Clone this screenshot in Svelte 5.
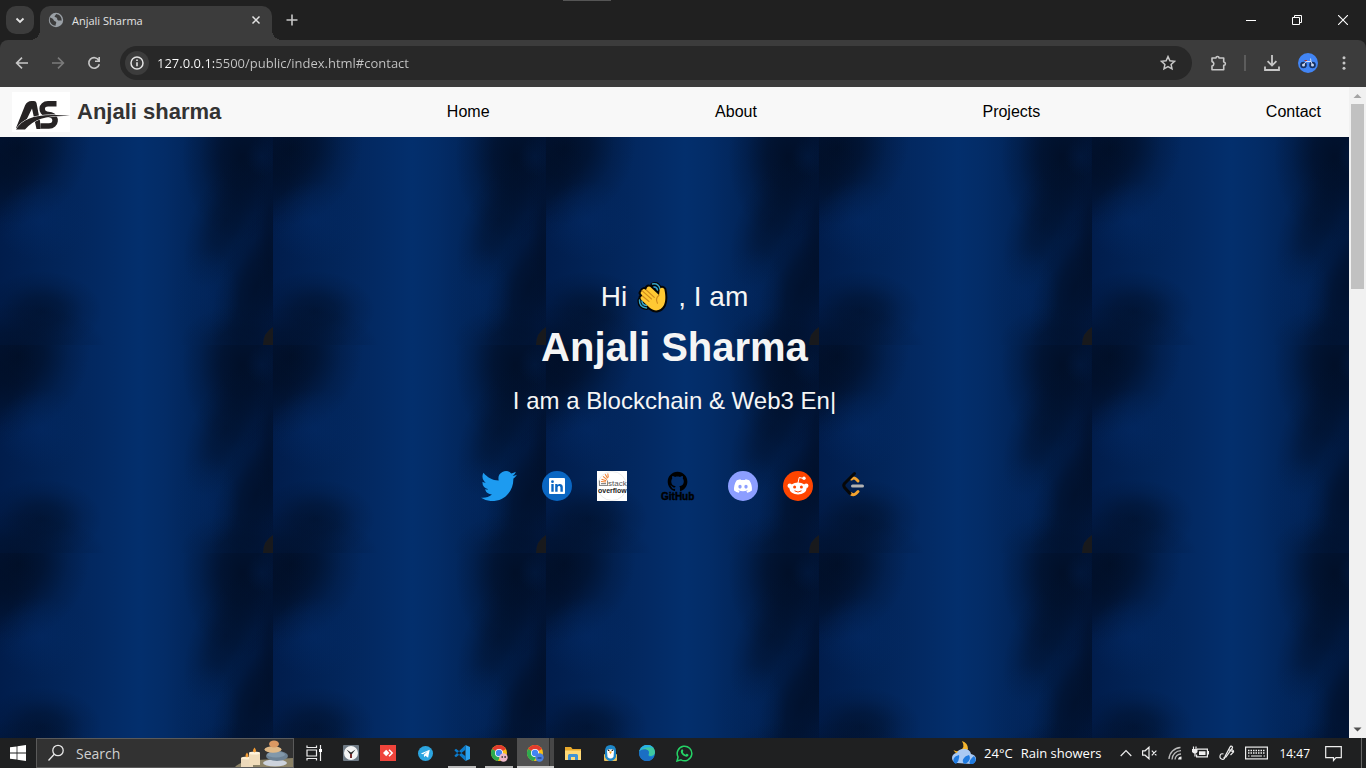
<script>
  const links = ['Home', 'About', 'Projects', 'Contact'];
</script>

<div class="screen">
  <header class="tabstrip">
    <button class="tabsearch" aria-label="Search tabs">
      <svg width="10" height="10" viewBox="0 0 10 10"><path d="M1.5 3.5 5 7l3.500-3.500" fill="none" stroke="#e3e3e3" stroke-width="1.800" /></svg>
    </button>
    <div class="tab">
      <svg width="16" height="16" viewBox="0 0 16 16">
        <circle cx="8" cy="8" r="7.200" fill="#9aa0a6" />
        <path d="M2 5.500C4 6 5 6.500 5.600 8c.6 1.400 2 1 2.600 2.300.4 1-.8 1.700-.6 3.500C4.500 13.500 2 11.500 1.800 8zM8 2c-.2 1.600-1.600 1.400-1.400 2.600.2 1 1.800.6 2.400 1.600.5.900 0 1.800 1.200 2.300 1 .4 2-.6 3.400.2.300-2.700-1-4.800-2.900-6z" fill="#3c3c3c" />
      </svg>
      <span class="tabtitle">Anjali Sharma</span>
      <button class="icon small" aria-label="Close tab">
        <svg width="10" height="10" viewBox="0 0 10 10"><path d="M1.500 1.500l7 7m0-7l-7 7" stroke="#e3e3e3" stroke-width="1.500" /></svg>
      </button>
    </div>
    <button class="icon newtab" aria-label="New tab">
      <svg width="12" height="12" viewBox="0 0 12 12"><path d="M6 .5v11M.5 6h11" stroke="#c7c7c7" stroke-width="1.600" /></svg>
    </button>
    <div class="handle"></div>
    <div class="wincontrols">
      <button aria-label="Minimize"><svg width="10" height="10" viewBox="0 0 10 10"><path d="M0 5.500h10" stroke="#fff" /></svg></button>
      <button aria-label="Restore"><svg width="10" height="10" viewBox="0 0 10 10"><path d="M.5 2.500h7v7h-7zM2.500 2.500v-2h7v7h-2" fill="none" stroke="#fff" /></svg></button>
      <button aria-label="Close"><svg width="10" height="10" viewBox="0 0 10 10"><path d="M0 0l10 10M10 0L0 10" stroke="#fff" stroke-width="1.100" /></svg></button>
    </div>
  </header>

  <div class="toolbar">
    <button class="icon" aria-label="Back"><svg width="14" height="14" viewBox="0 0 14 14"><path d="M13 7H2M7 1.600 1.600 7 7 12.400" fill="none" stroke="#c7c7c7" stroke-width="1.600" /></svg></button>
    <button class="icon" aria-label="Forward"><svg width="14" height="14" viewBox="0 0 14 14"><path d="M1 7h11M7 1.600 12.400 7 7 12.400" fill="none" stroke="#7b7b7b" stroke-width="1.600" /></svg></button>
    <button class="icon" aria-label="Reload"><svg width="14" height="14" viewBox="0 0 14 14"><path d="M11.800 4.400A5.300 5.300 0 1 0 12.300 8.200M12.200 1v4.300H8" fill="none" stroke="#c7c7c7" stroke-width="1.600" /></svg></button>
    <form class="omnibox">
      <button type="button" class="siteinfo" aria-label="Site information">
        <svg width="14" height="14" viewBox="0 0 14 14"><circle cx="7" cy="7" r="6" fill="none" stroke="#e3e3e3" stroke-width="1.500" /><path d="M7 6.200v4M7 3.600v1.400" stroke="#e3e3e3" stroke-width="1.600" /></svg>
      </button>
      <input class="url" aria-label="Address" value="127.0.0.1:5500/public/index.html#contact" />
      <button type="button" class="icon" aria-label="Bookmark">
        <svg width="16" height="16" viewBox="0 0 16 16"><path d="M8 1.600l1.900 4.200 4.600.5-3.400 3.100.9 4.500L8 11.600l-4 2.300.9-4.500L1.500 6.300l4.600-.5z" fill="none" stroke="#c7c7c7" stroke-width="1.500" /></svg>
      </button>
    </form>
    <div class="actions">
      <button class="icon" aria-label="Extensions">
        <svg width="18" height="18" viewBox="0 0 18 18"><path d="M3 4h4a1.500 1.500 0 0 1 3 0h4.700v4a1.700 1.700 0 0 1 0 3.400v4.300H3v-3.600a2.300 2.300 0 0 0 0-4.500z" fill="none" stroke="#c7c7c7" stroke-width="1.600" stroke-linejoin="round" /></svg>
      </button>
      <span class="divider"></span>
      <button class="icon" aria-label="Downloads">
        <svg width="18" height="18" viewBox="0 0 18 18"><path d="M9 1v10.500M4.600 7.200 9 11.600l4.400-4.400M2 12.500V16h14v-3.500" fill="none" stroke="#c7c7c7" stroke-width="1.800" /></svg>
      </button>
      <button class="icon" aria-label="Profile">
        <svg width="20" height="20" viewBox="0 0 20 20"><circle cx="10" cy="10" r="10" fill="#4285f4" /><g fill="#c3d6f5" stroke="#17305f" stroke-width="1.800"><circle cx="5.500" cy="12" r="2.400" /><circle cx="14.500" cy="12" r="2.400" /></g><path d="M5.500 12 8 8.500h5M13 8.500l1.500 3.500M13 8.500l-.5-3" fill="none" stroke="#d5dcef" stroke-width="1" /><path d="M6.500 7.500H9" stroke="#a33" /></svg>
      </button>
      <button class="icon" aria-label="Menu">
        <svg width="4" height="16" viewBox="0 0 4 16" fill="#c7c7c7"><circle cx="2" cy="2.800" r="1.500" /><circle cx="2" cy="8" r="1.500" /><circle cx="2" cy="13.200" r="1.500" /></svg>
      </button>
    </div>
  </div>

  <div class="viewport">
    <div class="page">
      <nav>
        <div class="brand">
          <svg width="58" height="40" viewBox="0 0 58 40">
            <rect width="58" height="40" fill="#fff" />
            <path d="M4 36 13 13.500Q15 9 19.500 9H22q2 0 2.500 2L29.500 37h-5L20 16.500 10.500 36z" fill="#262324" />
            <path d="M44.500 11.800H36c-7.500 0-7.500 9-1.500 10.300l4.500.9c6 1.500 5.500 11-2 11h-8.500" fill="none" stroke="#fff" stroke-width="8" />
            <path d="M44.500 11.800H36c-7.500 0-7.500 9-1.500 10.300l4.500.9c6 1.500 5.500 11-2 11h-8.500" fill="none" stroke="#262324" stroke-width="5.500" />
            <path d="M4 37.500C11 25.500 27 20.500 58 24c-21-.7-35 1.500-45 13.500z" fill="#fff" stroke="#fff" stroke-width="1" />
            <path d="M4 37.500C11 25.500 27 20.500 58 24c-21-.7-35 1.500-45 13.500z" fill="#262324" />
          </svg>
          <span>Anjali sharma</span>
        </div>
        {#each links as link}
          <a href={'#' + link.toLowerCase()}>{link}</a>
        {/each}
      </nav>

      <main>
        <svg class="backdrop" aria-hidden="true">
          <defs>
            <linearGradient id="base">
              <stop offset="0" stop-color="#011d4c" />
              <stop offset=".2" stop-color="#022458" />
              <stop offset=".36" stop-color="#032962" />
              <stop offset=".51" stop-color="#032f6d" />
              <stop offset=".6" stop-color="#032c67" />
              <stop offset=".72" stop-color="#022559" />
              <stop offset=".86" stop-color="#011e4b" />
              <stop offset="1" stop-color="#011840" />
            </linearGradient>
            <radialGradient id="shade">
              <stop offset="0" stop-color="#010e25" stop-opacity=".9" />
              <stop offset=".35" stop-color="#010e25" stop-opacity=".68" />
              <stop offset=".7" stop-color="#010e25" stop-opacity=".22" />
              <stop offset="1" stop-color="#010e25" stop-opacity="0" />
            </radialGradient>
            <radialGradient id="glow">
              <stop offset="0" stop-color="#032a66" stop-opacity=".5" />
              <stop offset="1" stop-color="#032a66" stop-opacity="0" />
            </radialGradient>
            <pattern id="tile" width="273" height="208" patternUnits="userSpaceOnUse">
              <rect width="273" height="208" fill="url(#base)" />
              <g fill="url(#shade)">
                <ellipse cx="18" cy="12" rx="70" ry="78" transform="rotate(30 18 12)" />
                <ellipse cx="0" cy="40" rx="40" ry="60" opacity=".6" />
                <ellipse cx="42" cy="174" rx="60" ry="40" opacity=".7" />
                <ellipse cx="16" cy="210" rx="90" ry="44" opacity=".8" />
                <ellipse cx="242" cy="20" rx="60" ry="84" />
                <ellipse cx="226" cy="84" rx="34" ry="72" transform="rotate(24 226 84)" opacity=".6" />
                <ellipse cx="256" cy="150" rx="38" ry="88" transform="rotate(18 256 150)" opacity=".8" />
                <ellipse cx="240" cy="206" rx="60" ry="38" opacity=".6" />
                <ellipse cx="273" cy="100" rx="18" ry="100" opacity=".5" />
              </g>
              <g fill="url(#glow)">
                <ellipse cx="42" cy="84" rx="46" ry="40" />
                <ellipse cx="262" cy="20" rx="16" ry="20" opacity=".4" />
                <ellipse cx="206" cy="158" rx="34" ry="46" opacity=".7" />
              </g>
              <path d="M263 208q0-12 10-18v18z" fill="#1b1a1a" opacity=".9" />
            </pattern>
          </defs>
          <rect width="100%" height="100%" fill="url(#tile)" />
        </svg>

        <div class="hero">
          <p class="hi">
            <span>Hi</span>
            <svg width="31" height="32" viewBox="0 0 31 32">
              <g stroke="#050505" stroke-width="4" stroke-linejoin="round" stroke-linecap="round" fill="none">
                <path d="M15.500 3.500q5-2 7.500 4M2.500 19q-.5 7 7 8" />
                <path d="M5 9.500Q6.500 7 9 9l1-2.500q2-2 4.500.5l7.500 7 .8-6Q25 5.500 27.300 8c1 4.500 2 11-.3 16-3 6-9 7-14 3L4 18.500q-1.500-3 1.500-3.500L3.500 12z" fill="#fc3" />
              </g>
              <path d="M15.500 3q6-1 7.500 5M17 6q3 0 3.500 3M2.500 19q-.5 7 7 8M5 20q0 4 4.500 4.500" fill="none" stroke="#35a5c8" stroke-width="1.500" stroke-linecap="round" />
              <path d="M5 9.500Q6.500 7 9 9l1-2.500q2-2 4.500.5l7.500 7 .8-6Q25 5.500 27.300 8c1 4.500 2 11-.3 16-3 6-9 7-14 3L4 18.500q-1.500-3 1.500-3.500L3.500 12z" fill="#ffc933" />
              <path d="M5.500 15l6.500 5.500M5 9.700l9.500 8.300M9.300 9l8 7.300M22 14.300q-4 3-1.500 8" fill="none" stroke="#d08a1c" stroke-width="1.100" stroke-linecap="round" />
            </svg>
            <span>, I am</span>
          </p>
          <h1>Anjali Sharma</h1>
          <p class="typed">I am a Blockchain &amp; Web3 En|</p>
          <div class="social">
            <a href="#twitter" aria-label="Twitter">
              <svg width="36" height="30" viewBox="0 2.100 24 19.600" preserveAspectRatio="none"><path fill="#1d9bf0" d="M23.953 4.570a10 10 0 01-2.825.775 4.958 4.958 0 002.163-2.723c-.951.555-2.005.959-3.127 1.184a4.920 4.920 0 00-8.384 4.482C7.690 8.095 4.067 6.130 1.640 3.162a4.822 4.822 0 00-.666 2.475c0 1.710.870 3.213 2.188 4.096a4.904 4.904 0 01-2.228-.616v.060a4.923 4.923 0 003.946 4.827 4.996 4.996 0 01-2.212.085 4.936 4.936 0 004.604 3.417 9.867 9.867 0 01-6.102 2.105c-.390 0-.779-.023-1.170-.067a13.995 13.995 0 007.557 2.209c9.053 0 13.998-7.496 13.998-13.985 0-.210 0-.420-.015-.630A9.935 9.935 0 0024 4.590z" /></svg>
            </a>
            <a href="#linkedin" aria-label="LinkedIn">
              <svg width="30" height="30" viewBox="0 0 30 30"><circle cx="15" cy="15" r="15" fill="#0a66c2" /><rect x="7" y="7" width="16" height="16" rx="1" fill="#fff" /><path d="M9.300 13h2.400v7.700H9.300zM13.200 13h2.300v1.100c1-1.800 5.300-1.900 5.300 1.900v4.700h-2.400v-4.200c0-2.200-2.800-2-2.800 0v4.200h-2.400z" fill="#0a66c2" /><circle cx="10.500" cy="10.700" r="1.400" fill="#0a66c2" /></svg>
            </a>
            <a href="#stackoverflow" aria-label="Stack Overflow">
              <svg width="30" height="30" viewBox="0 0 30 30">
                <rect width="30" height="30" fill="#fff" /><circle cx="15" cy="15" r="14.500" fill="#fff" stroke="#e4e4e4" stroke-width=".7" />
                <path d="M2.500 9.500v5h8v-5M4 12.600h5" fill="none" stroke="#888" stroke-width="1.100" />
                <path d="M4 10.500l5 .5M4.500 8.200l4.700 1.600M6 5.400l4 3.200M8.200 3.300l2.400 4M10.800 2.500l.5 4" stroke="#ef8236" stroke-width="1.100" />
                <text x="11" y="15" font-size="8" fill="#555">stack</text>
                <text x="1" y="21.500" font-size="7" font-weight="700" fill="#222">overflow</text>
              </svg>
            </a>
            <a href="#github" aria-label="GitHub">
              <svg width="51" height="30" viewBox="0 0 51 30">
                <g transform="translate(15.700 .6) scale(.82)"><path d="M12 .297c-6.630 0-12 5.373-12 12 0 5.303 3.438 9.800 8.205 11.385.600.113.820-.258.820-.577 0-.285-.010-1.040-.015-2.040-3.338.724-4.042-1.610-4.042-1.610C4.422 18.070 3.633 17.700 3.633 17.700c-1.087-.744.084-.729.084-.729 1.205.084 1.838 1.236 1.838 1.236 1.070 1.835 2.809 1.305 3.495.998.108-.776.417-1.305.760-1.605-2.665-.300-5.466-1.332-5.466-5.930 0-1.310.465-2.380 1.235-3.220-.135-.303-.540-1.523.105-3.176 0 0 1.005-.322 3.300 1.230.960-.267 1.980-.399 3-.405 1.020.006 2.040.138 3 .405 2.280-1.552 3.285-1.230 3.285-1.230.645 1.653.240 2.873.120 3.176.765.840 1.230 1.910 1.230 3.220 0 4.610-2.805 5.625-5.475 5.920.420.360.810 1.096.810 2.220 0 1.606-.015 2.896-.015 3.286 0 .315.210.690.825.570C20.565 22.092 24 17.592 24 12.297c0-6.627-5.373-12-12-12" /></g>
                <text x="9" y="29" font-size="10" font-weight="700" stroke="#000" stroke-width=".4">GitHub</text>
              </svg>
            </a>
            <a href="#discord" aria-label="Discord">
              <svg width="30" height="30" viewBox="0 0 30 30"><circle cx="15" cy="15" r="15" fill="#8c9eff" /><g transform="translate(6 6) scale(.75)"><path fill="#fff" d="M20.317 4.370a19.791 19.791 0 00-4.885-1.515.074.074 0 00-.079.037c-.211.375-.445.865-.608 1.250-1.845-.276-3.680-.276-5.487 0-.164-.393-.406-.874-.618-1.250a.077.077 0 00-.079-.037 19.736 19.736 0 00-4.885 1.515.070.070 0 00-.032.028C.533 9.046-.319 13.580.099 18.058a.082.082 0 00.031.056c2.053 1.508 4.041 2.423 5.993 3.029a.078.078 0 00.084-.028c.462-.630.873-1.295 1.226-1.994a.076.076 0 00-.042-.106c-.653-.248-1.274-.550-1.872-.892a.077.077 0 01-.008-.128l.372-.291a.074.074 0 01.078-.011c3.928 1.793 8.180 1.793 12.061 0a.074.074 0 01.079.010l.373.292a.077.077 0 01-.007.128c-.598.343-1.220.645-1.873.891a.077.077 0 00-.041.107c.360.698.772 1.363 1.225 1.993a.076.076 0 00.084.029c1.961-.607 3.950-1.522 6.002-3.029a.077.077 0 00.031-.055c.500-5.177-.838-9.674-3.549-13.660a.061.061 0 00-.031-.029zM8.020 15.331c-1.183 0-2.157-1.086-2.157-2.419s.956-2.419 2.157-2.419c1.211 0 2.176 1.095 2.157 2.419 0 1.333-.956 2.419-2.157 2.419zm7.975 0c-1.183 0-2.157-1.086-2.157-2.419s.955-2.419 2.157-2.419c1.211 0 2.176 1.095 2.157 2.419 0 1.333-.946 2.419-2.157 2.419z" /></g></svg>
            </a>
            <a href="#reddit" aria-label="Reddit">
              <svg width="30" height="30" viewBox="0 0 30 30"><circle cx="15" cy="15" r="15" fill="#ff4500" /><g fill="#fff"><ellipse cx="15" cy="17.500" rx="8.600" ry="6" /><circle cx="6.800" cy="14.700" r="2.300" /><circle cx="23.200" cy="14.700" r="2.300" /><circle cx="21" cy="7.300" r="1.700" /></g><path d="M15 12l1.200-5.500 4.500 1" fill="none" stroke="#fff" stroke-width="1" /><g fill="#ff4500"><circle cx="11.600" cy="16" r="1.500" /><circle cx="18.400" cy="16" r="1.500" /></g><path d="M11.500 19.800q3.500 2.500 7 0" fill="none" stroke="#ff4500" stroke-width="1" /></svg>
            </a>
            <a href="#leetcode" aria-label="LeetCode">
              <svg width="30" height="30" viewBox="0 0 30 30" fill="none" stroke-width="3" stroke-linecap="round" stroke-linejoin="round"><path d="M13.500 8q2.500-2 4.500 0l2 2M12.500 22.500q3 2.500 5.500 0l2-2" stroke="#f5a32e" /><path d="M16.500 2.500 6.500 12.500q-1.500 2 0 4l5.500 6" stroke="#070707" /><path d="M14.500 15h10" stroke="#b3b3b3" /></svg>
            </a>
          </div>
        </div>
      </main>
    </div>
    <div class="scrollbar">
      <svg width="17" height="17" viewBox="0 0 17 17"><path d="M4.500 11 8.500 7l4 4z" fill="#a3a3a3" /></svg>
      <div class="track"><div class="thumb"></div></div>
      <svg width="17" height="17" viewBox="0 0 17 17"><path d="M4.500 6.500l4 4 4-4z" fill="#505050" /></svg>
    </div>
  </div>

  <footer class="taskbar">
    <button class="start" aria-label="Start">
      <svg width="16" height="16" viewBox="0 0 16 16" fill="#fff"><path d="M0 2.300 6.600 1.400v6.200H0zM7.400 1.300 16 0v7.600H7.400zM0 8.400h6.600v6.200L0 13.700zM7.400 8.400H16V16l-8.600-1.300z" /></svg>
    </button>
    <div class="search">
      <svg width="18" height="18" viewBox="0 0 18 18"><circle cx="11" cy="6.500" r="5.200" fill="none" stroke="#e8e8e8" stroke-width="1.300" /><path d="M7.200 10.200 1.500 16.500" stroke="#e8e8e8" stroke-width="1.300" /></svg>
      <input type="text" placeholder="Search" aria-label="Search" />
      <svg class="art" width="58" height="28" viewBox="0 0 58 28">
        <path d="M0 28q5-6 22-7l36-2v9z" fill="#8b8266" />
        <rect x="6" y="19" width="12" height="9" fill="#ecd9bb" /><ellipse cx="12" cy="19" rx="6" ry="1.500" fill="#fff0d2" />
        <rect x="14" y="14" width="11" height="12" fill="#f0dcba" /><ellipse cx="19.500" cy="14" rx="5.500" ry="1.500" fill="#fff3da" />
        <path d="M12 13.500q3 4 0 5-3-1 0-5zM19.500 8.500q3 4 0 5-3-1 0-5z" fill="#f49b32" />
        <ellipse cx="40" cy="24" rx="12" ry="3.500" fill="#cdd3dc" /><ellipse cx="42" cy="17" rx="11" ry="5" fill="#6e8294" /><ellipse cx="41" cy="15.500" rx="9" ry="3" fill="#8298aa" /><ellipse cx="38" cy="10.500" rx="8.500" ry="3.200" fill="#e0b987" /><ellipse cx="39" cy="5" rx="5" ry="3.500" fill="#db9862" />
      </svg>
    </div>
    <div class="apps">
      <button aria-label="Task view"><svg width="17" height="16" viewBox="0 0 17 16"><path d="M1 .5v2h9.500v-2M1 15.500v-2h9.500v2M1 5h9.500v6H1zM14.500 0v16" fill="none" stroke="#eee" stroke-width="1.200" /><path d="M13 4h3v3h-3z" fill="#fff" /></svg></button>
      <button aria-label="Clock"><svg width="16" height="16" viewBox="0 0 16 16"><rect width="16" height="16" rx="1" fill="#6f7b86" /><circle cx="8" cy="8" r="7" fill="#f4f4f4" /><path d="M3.500 4.500 8 7.500l4.500-3-3.500 4.500V13H7V9z" fill="#2a2a2a" /><path d="M8 9v4" stroke="#c93030" /></svg></button>
      <button aria-label="AnyDesk"><svg width="16" height="16" viewBox="0 0 16 16"><rect width="16" height="16" fill="#ef443b" /><path d="M3 8l3.200-3.200L9.400 8l-3.200 3.200z" fill="#fff" /><path d="M9 4.800 12.200 8 9 11.200" fill="none" stroke="#fff" stroke-width="1.500" /></svg></button>
      <button aria-label="Telegram"><svg width="15" height="15" viewBox="0 0 16 16"><circle cx="8" cy="8" r="8" fill="#2ca5e0" /><path d="M3 8l9.500-4-1.700 8.500-3-2-1.300 1.400-.3-2.600 4.200-3.600-5.200 3.200z" fill="#fff" /></svg></button>
      <button class="open" aria-label="Visual Studio Code"><svg width="16" height="16" viewBox="0 0 16 16"><path d="M11.500 0 16 2v12l-4.500 2z" fill="#2ba3f0" /><path d="M11.500 0v4.800L2 12.200.5 11v-.6zM11.500 16v-4.800L2 3.800.5 5v.6z" fill="#0b7bcc" /></svg></button>
      <button class="open" aria-label="Chrome">
        <svg width="17" height="17" viewBox="0 0 17 17"><circle cx="8" cy="8" r="8" fill="#fbc116" /><path d="M8 8 1.100 4A8 8 0 0 1 15 4z" fill="#e33b2e" /><path d="M8 8 1.100 4a8 8 0 0 0 5.800 12L10 10z" fill="#2da94f" /><circle cx="8" cy="8" r="4" fill="#fff" /><circle cx="8" cy="8" r="3.200" fill="#4285f4" /><circle cx="12.500" cy="12.500" r="4.200" fill="#edb7c8" /><path d="M10.500 12h1.500m1.300 0H15" stroke="#333" stroke-width="1.500" /></svg>
      </button>
      <button class="open active" aria-label="Chrome, active window">
        <svg width="17" height="17" viewBox="0 0 17 17"><circle cx="8" cy="8" r="8" fill="#fbc116" /><path d="M8 8 1.100 4A8 8 0 0 1 15 4z" fill="#e33b2e" /><path d="M8 8 1.100 4a8 8 0 0 0 5.800 12L10 10z" fill="#2da94f" /><circle cx="8" cy="8" r="4" fill="#fff" /><circle cx="8" cy="8" r="3.200" fill="#4285f4" /><circle cx="12.500" cy="12.500" r="4.200" fill="#4b80df" /><path d="M10.500 13h4" stroke="#27488e" stroke-width="1.500" /></svg>
      </button>
      <button aria-label="File Explorer"><svg width="16" height="15" viewBox="0 0 16 15"><path d="M0 1h6l1.500 2H16v11H0z" fill="#e8a92c" /><path d="M0 4.500h16V14H0z" fill="#ffd977" /><path d="M3 14V9.500Q3 8 4.500 8h7Q13 8 13 9.500V14h-3v-3H6v3z" fill="#3f93d6" /></svg></button>
      <button aria-label="Penguin"><svg width="13" height="16" viewBox="0 0 13 16"><rect y="9" width="13" height="7" rx="1" fill="#e9c05a" /><path d="M1 12V6q0-6 5.500-6T12 6v6q-2 4-5.500 4T1 12z" fill="#1e88c9" /><path d="M3 6q1-3 3.500-1.500Q9 3 10 6l-.5 6q-3 3-6 0z" fill="#fff" /><path d="M5 6.500h3l-1.500 2.700z" fill="#f5a21b" /><circle cx="4.700" cy="5.200" r=".8" /><circle cx="8.300" cy="5.200" r=".8" /></svg></button>
      <button aria-label="Edge"><svg width="16" height="16" viewBox="0 0 16 16"><circle cx="8" cy="8" r="8" fill="#1683d4" /><path d="M.3 6.500C1.500 2.500 4.500 0 8.200 0 13 0 16 3.500 16 7c0 3-2.300 4-4.500 4-2 0-2.500-1-1.500-2 .6-3-1.800-4.500-4.200-4.300C3 4.700 1 5.500.3 6.500z" fill="#3fc9a0" /><path d="M.3 6.500C2 3.500 8 3.500 9.500 6c1 2-.6 2-.3 4 .3 2 3 3.200 6 1.500C13 16 8 17 5 15.500.5 13.500-.3 9.500.3 6.500z" fill="#1b6fc4" /><path d="M.3 6.500C1.500 2.500 4.500 0 8.200 0c3 0 5 1.200 6.500 3C12 1.500 4 1.500.3 6.500z" fill="#28b0e6" /></svg></button>
      <button aria-label="WhatsApp"><svg width="17" height="17" viewBox="0 0 17 17"><path d="M1 16l1.100-4A7.300 7.300 0 1 1 5 14.900z" fill="none" stroke="#25d366" stroke-width="1.500" /><path d="M5.300 4.800c.8-1 1.400-.6 1.700.3.400 1 .4 1-.2 1.800.6 1.300 1.600 2.200 2.900 2.800.8-.9.900-1.100 1.800-.6 1.200.6 1.200.8.800 1.600-1.200 1.700-3.300 1-5-.2-2-1.500-3.300-3.500-2-5.700z" fill="#25d366" /></svg></button>
    </div>
    <div class="tray">
      <button class="weather">
        <svg width="24" height="24" viewBox="0 0 24 24"><path d="M10 0q4 7-2.500 9.500Q4 11 1.500 9 4 14 9 13t7-5Q16 2 10 0z" fill="#f5b52e" /><path d="M5 22a5 5 0 0 1 0-10q1-4 7-4t7 5q5 1 5 5t-5 5z" fill="#a9c9f3" /><path d="M4 23q-4-2-2-6 1-2 5-3 1 5-3 9zM13 23q-4-2-1-6 1-2 5-3 3 5-4 9zM18 23q-2-3 4-8 4 5-1 8z" fill="#1f7be0" /></svg>
        <span>24°C</span><span>Rain showers</span>
      </button>
      <svg width="12" height="12" viewBox="0 0 12 12"><path d="M.7 9 6 3.500 11.300 9" fill="none" stroke="#eee" stroke-width="1.200" /></svg>
      <svg width="16" height="14" viewBox="0 0 16 14"><path d="M.6 4.800h2.500L7 1.200v11.600L3.100 9.200H.6zM9.800 4.700l4.600 4.600m0-4.600L9.800 9.300" fill="none" stroke="#eee" stroke-width="1.200" /></svg>
      <svg width="14" height="14" viewBox="0 0 14 14"><g fill="none" stroke="#bbb" stroke-width="1.300"><path d="M1 13A12 12 0 0 1 12.500 1.500M4 13.500A9 9 0 0 1 13 4.700M7 13.500a6 6 0 0 1 6-5.500" /></g><path d="M10 13.500a3.500 3.500 0 0 1 3.500-3v3z" fill="#eee" /></svg>
      <svg width="17" height="14" viewBox="0 0 17 14"><path d="M5 3.100h10.400v7.800H4.600V8.500M15.400 5.500h1v3" fill="none" stroke="#eee" stroke-width="1.200" /><path d="M7 5.200h6.500v3.800H7zM0 3h5.500v3Q4.500 7.500 3 7.500T0 6z" fill="#eee" /><path d="M1.500 .5v3M4 .5v3M3 7v3.500" stroke="#eee" stroke-width="1.200" /></svg>
      <svg width="16" height="16" viewBox="0 0 16 16"><path d="M4.500 9Q1.500 8 1 11t3 3.500Q6 14 6 11.500L11 2q1-1.500 2.200-.5.800 1-.2 2L7 12l-2.500.8M9.500 4.500l5 2.500-3 3M13 4.500q2 1 1.500 2.500" fill="none" stroke="#eee" stroke-width="1.200" /></svg>
      <svg class="kbd" width="23" height="14" viewBox="0 0 23 14"><rect x=".6" y="1.100" width="21.800" height="11.800" fill="none" stroke="#eee" stroke-width="1.200" /><path d="M3 4.500h17M3 7h17" stroke="#eee" stroke-width="1.300" stroke-dasharray="1.500 1" /><path d="M3 10h1.500M6 10h11M18.500 10H20" stroke="#eee" stroke-width="1.200" /></svg>
      <time>14:47</time>
      <svg width="17" height="17" viewBox="0 0 17 17"><path d="M.7 1.700h15.600v11H11L8.500 15.500V12.700H.7z" fill="none" stroke="#eee" stroke-width="1.200" /></svg>
      <span class="peek"></span>
    </div>
  </footer>
</div>

<style>
  :global(body) { margin: 0; }
  * { box-sizing: border-box; }
  button { border: 0; padding: 0; background: none; color: inherit; font: inherit; display: flex; align-items: center; justify-content: center; }
  input { border: 0; outline: 0; padding: 0; background: none; font: inherit; min-width: 0; }
  svg { display: block; flex: none; }

  .screen { height: 100vh; display: flex; flex-direction: column; overflow: hidden; background: #202020; font-family: "Open Sans", "Noto Sans", sans-serif; }

  .tabstrip { height: 40px; flex: none; display: flex; align-items: flex-end; padding-left: 6px; position: relative; background: #202020; }
  .tabsearch { width: 28px; height: 28px; margin: 0 6px 6px 0; border-radius: 10px; background: #3c3c3c; }
  .tab { width: 232px; height: 34px; padding: 0 8px 6px; display: flex; align-items: center; gap: 8px; position: relative; border-radius: 10px 10px 0 0; background: #3c3c3c; color: #e3e3e3; }
  .tab::before, .tab::after { content: ""; position: absolute; bottom: 0; width: 10px; height: 10px; }
  .tab::before { left: -10px; background: radial-gradient(circle at 0 0, transparent 10px, #3c3c3c 10px); }
  .tab::after { right: -10px; background: radial-gradient(circle at 100% 0, transparent 10px, #3c3c3c 10px); }
  .tabtitle { flex: 1; font-size: 11px; }
  .small { width: 16px; height: 16px; }
  .newtab { width: 36px; height: 28px; margin: 0 0 6px 2px; }
  .handle { position: absolute; top: 0; left: 50%; width: 48px; height: 1px; margin-left: -120px; background: #555; }
  .wincontrols { margin-left: auto; display: flex; align-self: stretch; }
  .wincontrols button { width: 46px; height: 40px; }

  .toolbar { height: 47px; flex: none; display: flex; align-items: center; padding: 0 4px 1px; border-radius: 8px 8px 0 0; background: #3c3c3c; }
  .icon { flex: none; }
  .toolbar .icon { width: 36px; height: 34px; }
  .omnibox { flex: 1; min-width: 0; height: 34px; margin: 0 8px; display: flex; align-items: center; padding: 0 6px 0 5px; border-radius: 17px; background: #282828; }
  .siteinfo { width: 24px; height: 24px; flex: none; border-radius: 50%; background: #3c3c3c; }
  .url { flex: 1; height: 24px; margin-left: 8px; font-size: 13px; background: linear-gradient(90deg, #fff 58px, #c7c7c7 58px); background-clip: text; -webkit-text-fill-color: transparent; }
  .actions { display: flex; align-items: center; }
  .divider { width: 2px; height: 16px; margin: 0 8px; background: #5c5c5c; }

  .viewport { flex: 1; min-height: 0; display: flex; font-family: "Liberation Sans", Arial, sans-serif; }
  .page { flex: 1; min-width: 0; display: flex; flex-direction: column; }
  nav { height: 50px; flex: none; display: flex; align-items: center; justify-content: space-between; padding: 0 28px 0 12px; background: #f8f8f8; }
  nav a { color: #000; text-decoration: none; font-size: 16px; }
  .brand { display: flex; align-items: center; gap: 7px; font-size: 22px; font-weight: 700; color: #333; }
  main { flex: 1; min-height: 0; display: grid; background: #02225a; }
  .backdrop { grid-area: 1 / 1; width: 100%; height: 100%; min-height: 0; }
  .hero { grid-area: 1 / 1; position: relative; display: flex; flex-direction: column; align-items: center; padding-top: 140px; color: #f5f5f5; }
  .hero p, h1 { margin: 0; }
  .hi { display: flex; align-items: center; gap: 10px; height: 40px; font-size: 28px; }
  h1 { margin-top: 7px; font-size: 40px; line-height: 46px; }
  .hero .typed { margin-top: 15px; font-size: 24px; line-height: 32px; }
  .social { display: flex; gap: 25px; margin-top: 54px; }

  .scrollbar { width: 17px; flex: none; display: flex; flex-direction: column; background: #f1f1f1; }
  .track { flex: 1; padding: 0 2px; }
  .thumb { height: 30%; background: #c1c1c1; }

  .taskbar { height: 30px; flex: none; display: flex; align-items: stretch; background: #1f2021; color: #fff; }
  .start { width: 36px; }
  .search { width: 258px; display: flex; align-items: center; gap: 11px; padding-left: 10px; border: 1px solid #5a5a5a; background: #323232; overflow: hidden; }
  .search input { flex: 1; font-size: 14px; color: #d0d0d0; }
  .search input::placeholder { color: #d0d0d0; opacity: 1; }
  .art { align-self: flex-end; }
  .apps { display: flex; margin-left: 1px; }
  .apps button { width: 37px; border: 0 solid transparent; border-width: 0 4px 0 5px; }
  .apps .open { background: linear-gradient(#b9b9b9, #b9b9b9) bottom / 28px 2px no-repeat padding-box; }
  .apps .active { border-width: 0; background: linear-gradient(#c9c9c9, #c9c9c9) bottom / 100% 2px no-repeat, linear-gradient(90deg, #505050 32px, #2b2b2b 32px, #2b2b2b 33px, #474747 33px); }
  .tray { margin-left: auto; display: flex; align-items: center; gap: 10px; font-size: 13px; }
  .weather { gap: 8px; margin-right: 9px; }
  .kbd { margin-right: 1px; }
  .tray time { font-size: 12px; margin-right: 5px; }
  .peek { width: 1px; height: 30px; margin: 0 4px 0 9px; background: #666; }
</style>
